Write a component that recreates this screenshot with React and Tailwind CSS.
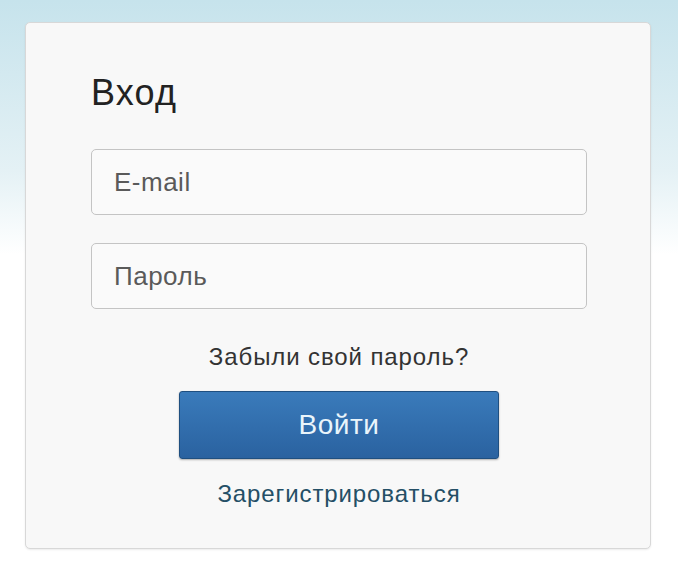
export default function App() {
  return (
    <div className="min-h-[566px] w-[678px] bg-gradient-to-b from-[#c6e3ec] via-[#e4f1f5] via-30% to-white to-45% pt-[22px] pl-[25px] font-['Liberation_Sans',Arial,sans-serif]">
      <div className="w-[626px] h-[527px] bg-[#f8f8f8] border border-[#d8d8d8] rounded-[5px] shadow-[0_1px_2px_rgba(0,0,0,0.08)] px-[65px] pt-[52px]">
        <h1 className="text-[36px] leading-none text-[#222] tracking-[1.2px]">Вход</h1>
        <div className="mt-[38px] flex flex-col gap-[28px]">
          <input
            type="text"
            placeholder="E-mail"
            className="w-[496px] h-[66px] rounded-[5px] border border-[#c4c4c4] bg-[#fafafa] px-[22px] text-[26px] tracking-[0.5px] text-[#555] placeholder:text-[#5a5a5a] outline-none"
          />
          <input
            type="password"
            placeholder="Пароль"
            className="w-[496px] h-[66px] rounded-[5px] border border-[#c4c4c4] bg-[#fafafa] px-[22px] text-[26px] tracking-[0.5px] text-[#555] placeholder:text-[#5a5a5a] outline-none"
          />
        </div>
        <div className="mt-[34px] w-[496px] flex flex-col items-center">
          <a className="text-[24px] leading-[28px] tracking-[0.9px] text-[#333]">Забыли свой пароль?</a>
          <button className="mt-[20px] w-[320px] h-[68px] rounded-[3px] bg-gradient-to-b from-[#3a7bbb] to-[#2a62a0] border border-[#1f4f80] shadow-[0_1px_2px_rgba(0,0,0,0.3)] text-[28px] tracking-[0.5px] text-[#eaf5fb]">
            Войти
          </button>
          <a className="mt-[21px] text-[24px] leading-[28px] tracking-[0.9px] text-[#244f66]">Зарегистрироваться</a>
        </div>
      </div>
    </div>
  );
}
